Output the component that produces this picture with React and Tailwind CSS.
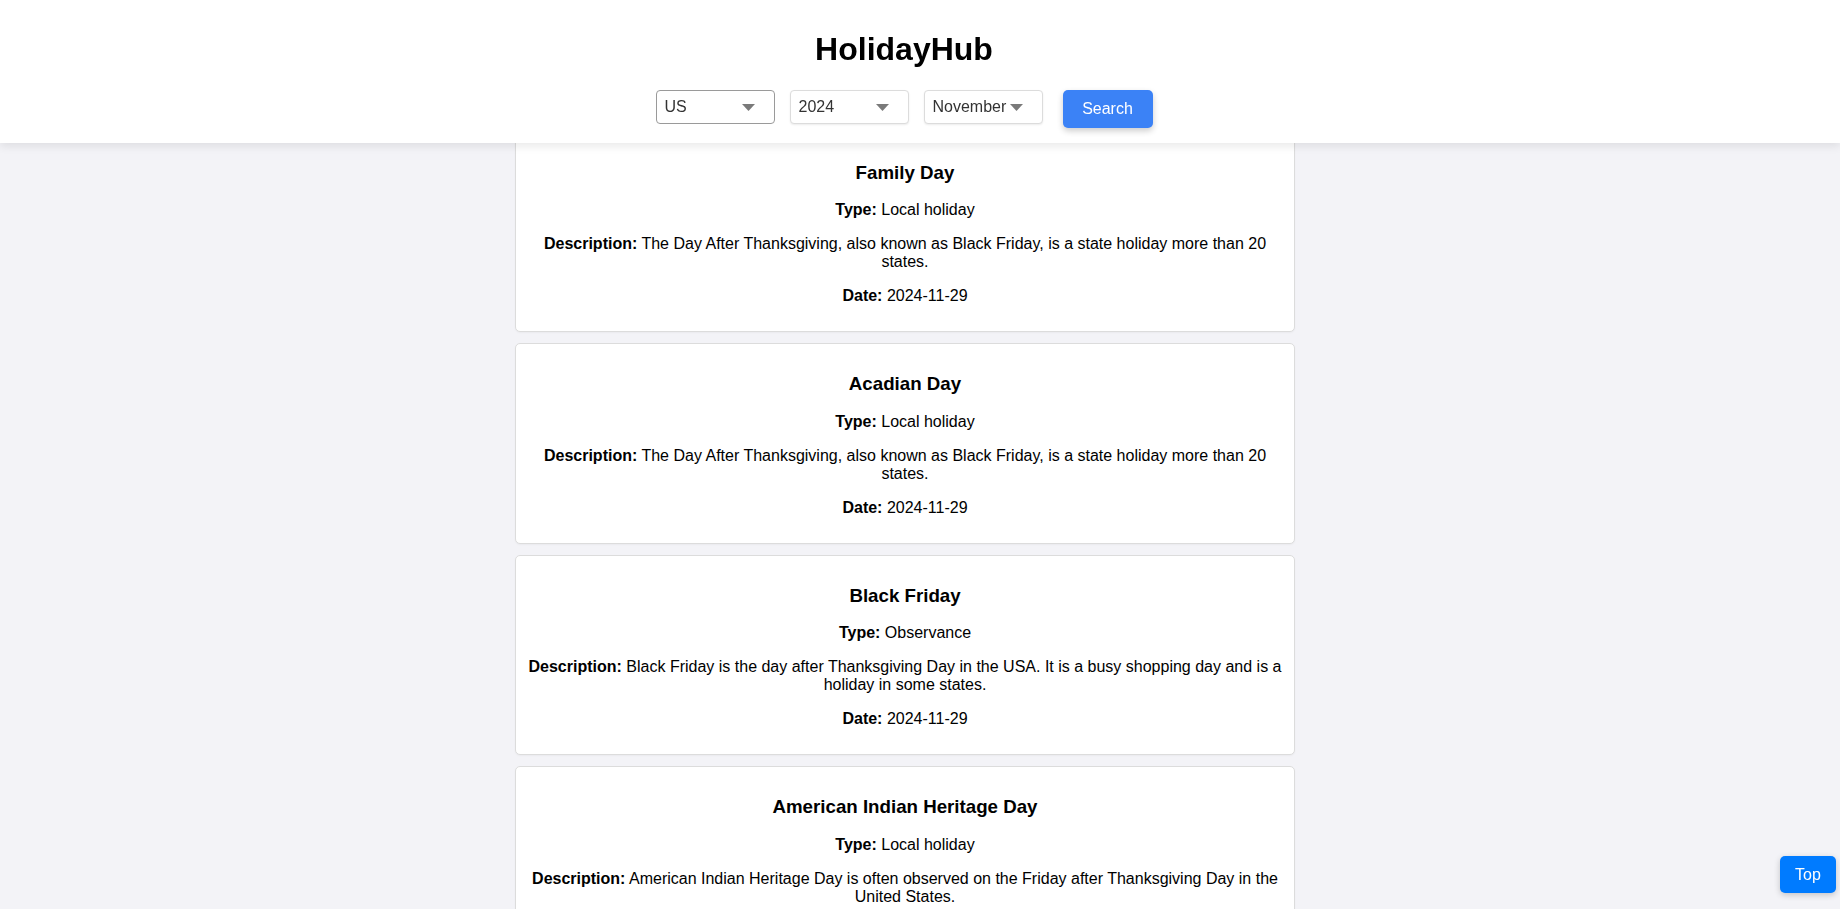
import React, { useState } from "react";

const countries = ["US", "CA", "GB", "AU", "IN"];
const years = ["2023", "2024", "2025"];
const months = [
  "January",
  "February",
  "March",
  "April",
  "May",
  "June",
  "July",
  "August",
  "September",
  "October",
  "November",
  "December",
];

const holidays = [
  {
    name: "Family Day",
    type: "Local holiday",
    description:
      "The Day After Thanksgiving, also known as Black Friday, is a state holiday more than 20 states.",
    date: "2024-11-29",
  },
  {
    name: "Acadian Day",
    type: "Local holiday",
    description:
      "The Day After Thanksgiving, also known as Black Friday, is a state holiday more than 20 states.",
    date: "2024-11-29",
  },
  {
    name: "Black Friday",
    type: "Observance",
    description:
      "Black Friday is the day after Thanksgiving Day in the USA. It is a busy shopping day and is a holiday in some states.",
    date: "2024-11-29",
  },
  {
    name: "American Indian Heritage Day",
    type: "Local holiday",
    description:
      "American Indian Heritage Day is often observed on the Friday after Thanksgiving Day in the United States.",
    date: "2024-11-29",
  },
];

// small grey triangle used as the dropdown arrow
const Caret = () => (
  <svg
    width="13"
    height="7"
    viewBox="0 0 13 7"
    className="pointer-events-none absolute right-[20px] top-[14px]"
  >
    <path d="M0 0h13L6.5 7z" fill="#7a7a7a" />
  </svg>
);

const Dropdown = ({ value, onChange, options, focused }) => (
  <div className="relative">
    <select
      value={value}
      onChange={(e) => onChange(e.target.value)}
      className={
        focused
          ? "appearance-none w-[119px] h-[34px] pl-[8px] pr-[20px] rounded-[4px] border border-[#9a9a9a] bg-white text-[16px] text-[#333] outline-none"
          : "appearance-none w-[119px] h-[34px] pl-[8px] pr-[20px] rounded-[4px] border border-[#dcdcdc] bg-white text-[16px] text-[#333] shadow-[0_1px_2px_rgba(0,0,0,0.08)] outline-none"
      }
    >
      {options.map((o) => (
        <option key={o} value={o}>
          {o}
        </option>
      ))}
    </select>
    <Caret />
  </div>
);

const HolidayCard = ({ holiday }) => (
  <div className="bg-white border border-[#dcdcdc] rounded-[5px] p-[10px] text-center text-black shadow-[0_1px_2px_rgba(0,0,0,0.04)]">
    <h3 className="text-[18.72px] leading-[21px] font-bold my-[18.72px]">
      {holiday.name}
    </h3>
    <p className="text-[16px] leading-[18px] my-4">
      <strong>Type:</strong> {holiday.type}
    </p>
    <p className="text-[16px] leading-[18px] my-4">
      <strong>Description:</strong> {holiday.description}
    </p>
    <p className="text-[16px] leading-[18px] my-4">
      <strong>Date:</strong> {holiday.date}
    </p>
  </div>
);

export default function App() {
  const [country, setCountry] = useState("US");
  const [year, setYear] = useState("2024");
  const [month, setMonth] = useState("November");

  return (
    <div className="h-screen overflow-hidden bg-[#f3f3f7] font-['Liberation_Sans',Arial,sans-serif]">
      <header className="fixed top-0 left-0 right-0 z-10 h-[143px] bg-white pt-[10px] pr-[32px] shadow-[0_4px_8px_rgba(0,0,0,0.08)]">
        <h1 className="text-center text-[32px] leading-[37px] font-bold text-black mt-[21px] mb-[22px]">
          HolidayHub
        </h1>
        <div className="flex justify-center items-start">
          <Dropdown value={country} onChange={setCountry} options={countries} focused />
          <div className="ml-[15px]">
            <Dropdown value={year} onChange={setYear} options={years} />
          </div>
          <div className="ml-[15px]">
            <Dropdown value={month} onChange={setMonth} options={months} />
          </div>
          <button
            type="button"
            className="ml-[20px] w-[90px] h-[38px] rounded-[5px] bg-[#3b82f6] text-white text-[16px] shadow-[0_3px_6px_rgba(0,0,0,0.2)]"
          >
            Search
          </button>
        </div>
      </header>

      <main className="pr-[30px] pt-[132px]">
        <div className="w-[800px] mx-auto px-[10px] flex flex-col gap-[11px]">
          {holidays.map((h) => (
            <HolidayCard key={h.name} holiday={h} />
          ))}
        </div>
      </main>

      <button
        type="button"
        className="fixed bottom-[16px] right-[4px] w-[56px] h-[37px] rounded-[5px] bg-[#007bff] text-white text-[16px] shadow-[0_2px_6px_rgba(0,0,0,0.2)]"
      >
        Top
      </button>
    </div>
  );
}
